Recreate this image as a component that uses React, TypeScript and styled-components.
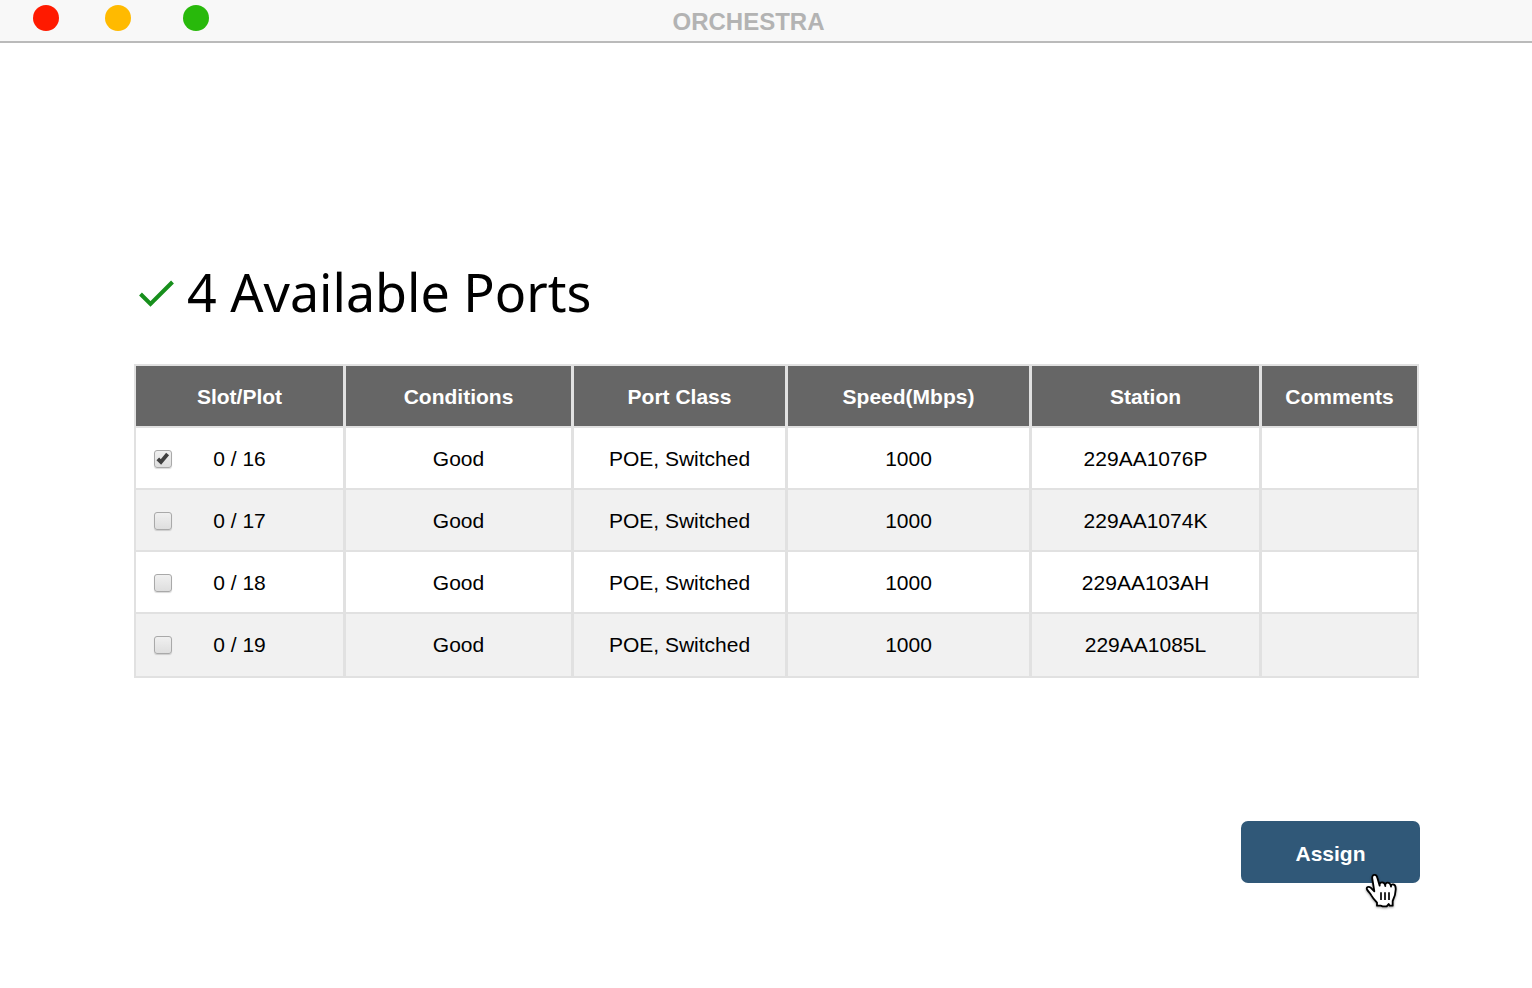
import React, { useState } from 'react';
import styled, { createGlobalStyle } from 'styled-components';

const GlobalStyle = createGlobalStyle`
  *, *::before, *::after { box-sizing: border-box; }
  body {
    margin: 0;
    background: #ffffff;
    color: #000000;
    font-family: Arial, "Liberation Sans", sans-serif;
  }
`;

const TitleBar = styled.header`
  display: grid;
  grid-template-columns: 1fr auto 1fr;
  height: 43px;
  padding: 0 35px 0 0;
  background: #f8f8f8;
  border-bottom: 2px solid #bababa;
`;

const WindowControls = styled.div`
  display: flex;
  padding: 5px 0 0 33px;
`;

const Light = styled.button<{ $color: string; $gap: number }>`
  width: 26px;
  height: 26px;
  padding: 0;
  margin-right: ${(p) => p.$gap}px;
  border: 0;
  border-radius: 50%;
  background: ${(p) => p.$color};
`;

const AppName = styled.span`
  padding-top: 8px;
  color: #b3b3b3;
  font-size: 24px;
  font-weight: 700;
  line-height: 28px;
`;

const Main = styled.main`
  padding: 217px 113px 60px 134px;
`;

const Heading = styled.h1`
  display: flex;
  align-items: center;
  gap: 12px;
  margin: 0 0 40px;
  padding-left: 4px;
  font-family: "Trebuchet MS", "Noto Sans", sans-serif;
  font-size: 52px;
  font-weight: 400;
  line-height: 64px;
`;

const PortTable = styled.table`
  width: 100%;
  table-layout: fixed;
  border-spacing: 0;
  border: solid #e1e1e1;
  border-width: 2px 0 0 2px;
  font-size: 21px;
  line-height: 24px;
  text-align: center;
`;

const Column = styled.col<{ $width: number }>`
  width: ${(p) => p.$width}px;
`;

const HeadCell = styled.th`
  height: 62px;
  padding: 1px 0 0;
  background: #666666;
  color: #ffffff;
  font-weight: 700;
  border: solid #e1e1e1;
  border-width: 0 3px 2px 0;
  &:last-child { border-right-width: 2px; }
`;

const Cell = styled.td`
  height: 62px;
  padding: 19px 0 17px;
  vertical-align: top;
  border: solid #e1e1e1;
  border-width: 0 3px 2px 0;
  &:last-child { border-right-width: 2px; }
`;

const Row = styled.tr`
  &:nth-child(even) { background: #f1f1f1; }
  &:last-child ${Cell} { height: 64px; }
`;

const SlotLabel = styled.label`
  display: grid;
  grid-template-columns: 1fr auto 1fr;
  align-items: center;
`;

const Tick = styled.span`
  position: relative;
  width: 18px;
  height: 18px;
  margin-left: 18px;
  svg {
    position: absolute;
    inset: 0;
    pointer-events: none;
  }
`;

const CheckBox = styled.input`
  appearance: none;
  display: block;
  width: 18px;
  height: 18px;
  margin: 0;
  border: 1px solid #a9a9a9;
  border-radius: 3px;
  background: linear-gradient(#f0f0f0, #dedede);
  box-shadow: 0 1px 1px rgba(0, 0, 0, 0.15);
`;

const Actions = styled.div`
  display: flex;
  justify-content: flex-end;
  margin: 143px -1px 0 0;
`;

const ButtonArea = styled.div`
  position: relative;
`;

const AssignButton = styled.button`
  display: block;
  width: 179px;
  height: 62px;
  padding: 4px 0 0;
  border: 0;
  border-radius: 7px;
  background: #305878;
  color: #ffffff;
  font-family: inherit;
  font-size: 21px;
  font-weight: 700;
  line-height: 24px;
  cursor: pointer;
`;

const HandPointer = styled.svg`
  position: absolute;
  left: 125px;
  top: 53px;
  overflow: visible;
  pointer-events: none;
  filter: drop-shadow(0 1px 1px rgba(0, 0, 0, 0.4));
`;

const lights = [
  { name: 'Close', color: '#ff1a00', gap: 46 },
  { name: 'Minimize', color: '#ffba00', gap: 52 },
  { name: 'Zoom', color: '#28b90b', gap: 0 },
];

const columns = [
  { title: 'Slot/Plot', width: 210 },
  { title: 'Conditions', width: 228 },
  { title: 'Port Class', width: 214 },
  { title: 'Speed(Mbps)', width: 244 },
  { title: 'Station', width: 230 },
  { title: 'Comments', width: 157 },
];

const ports = [
  { slot: '0 / 16', station: '229AA1076P' },
  { slot: '0 / 17', station: '229AA1074K' },
  { slot: '0 / 18', station: '229AA103AH' },
  { slot: '0 / 19', station: '229AA1085L' },
];

export default function App() {
  const [selected, setSelected] = useState<string[]>(['0 / 16']);

  const toggle = (slot: string) =>
    setSelected((list) =>
      list.includes(slot) ? list.filter((s) => s !== slot) : [...list, slot],
    );

  return (
    <>
      <GlobalStyle />
      <TitleBar>
        <WindowControls>
          {lights.map((l) => (
            <Light key={l.name} aria-label={l.name} $color={l.color} $gap={l.gap} />
          ))}
        </WindowControls>
        <AppName>ORCHESTRA</AppName>
      </TitleBar>
      <Main>
        <Heading>
          <svg width="37" height="34" viewBox="0 0 37 34" aria-hidden="true">
            <path d="M2.5 19 L12.5 29 L34.5 7" fill="none" stroke="#178f1c" strokeWidth="4" />
          </svg>
          4 Available Ports
        </Heading>
        <PortTable>
          <colgroup>
            {columns.map((c) => (
              <Column key={c.title} $width={c.width} />
            ))}
          </colgroup>
          <thead>
            <tr>
              {columns.map((c) => (
                <HeadCell key={c.title} scope="col">{c.title}</HeadCell>
              ))}
            </tr>
          </thead>
          <tbody>
            {ports.map((p) => (
              <Row key={p.slot}>
                <Cell>
                  <SlotLabel>
                    <Tick>
                      <CheckBox
                        type="checkbox"
                        checked={selected.includes(p.slot)}
                        onChange={() => toggle(p.slot)}
                      />
                      {selected.includes(p.slot) && (
                        <svg width="18" height="18" viewBox="0 0 18 18" aria-hidden="true">
                          <path d="M3.8 8.8 L7 12 L13.6 4" fill="none" stroke="#404040" strokeWidth="3.8" />
                        </svg>
                      )}
                    </Tick>
                    {p.slot}
                  </SlotLabel>
                </Cell>
                <Cell>Good</Cell>
                <Cell>POE, Switched</Cell>
                <Cell>1000</Cell>
                <Cell>{p.station}</Cell>
                <Cell />
              </Row>
            ))}
          </tbody>
        </PortTable>
        <Actions>
          <ButtonArea>
            <AssignButton type="button">Assign</AssignButton>
            <HandPointer width="31" height="34" viewBox="408 192 93 102" aria-hidden="true">
              <path
                d="M441 287 V278 C434 270 429 265 424 256 C420 248 413 243 411 238 C408 231 416 228 422 233 L433 244 L427 207 C424 192 439 191 442 203 L449 227 C447 214 464 213 466 228 C464 215 480 214 483 230 C482 219 497 221 497 235 C498 251 494 261 488 273 V287 H479 L476 282 L470 289 H458 L452 287 Z"
                fill="#ffffff"
                stroke="#000000"
                strokeWidth="5.5"
                strokeLinejoin="round"
              />
              <path d="M453 247 V270 M465 247 V270 M477 247 V270" stroke="#000000" strokeWidth="5" />
            </HandPointer>
          </ButtonArea>
        </Actions>
      </Main>
    </>
  );
}
